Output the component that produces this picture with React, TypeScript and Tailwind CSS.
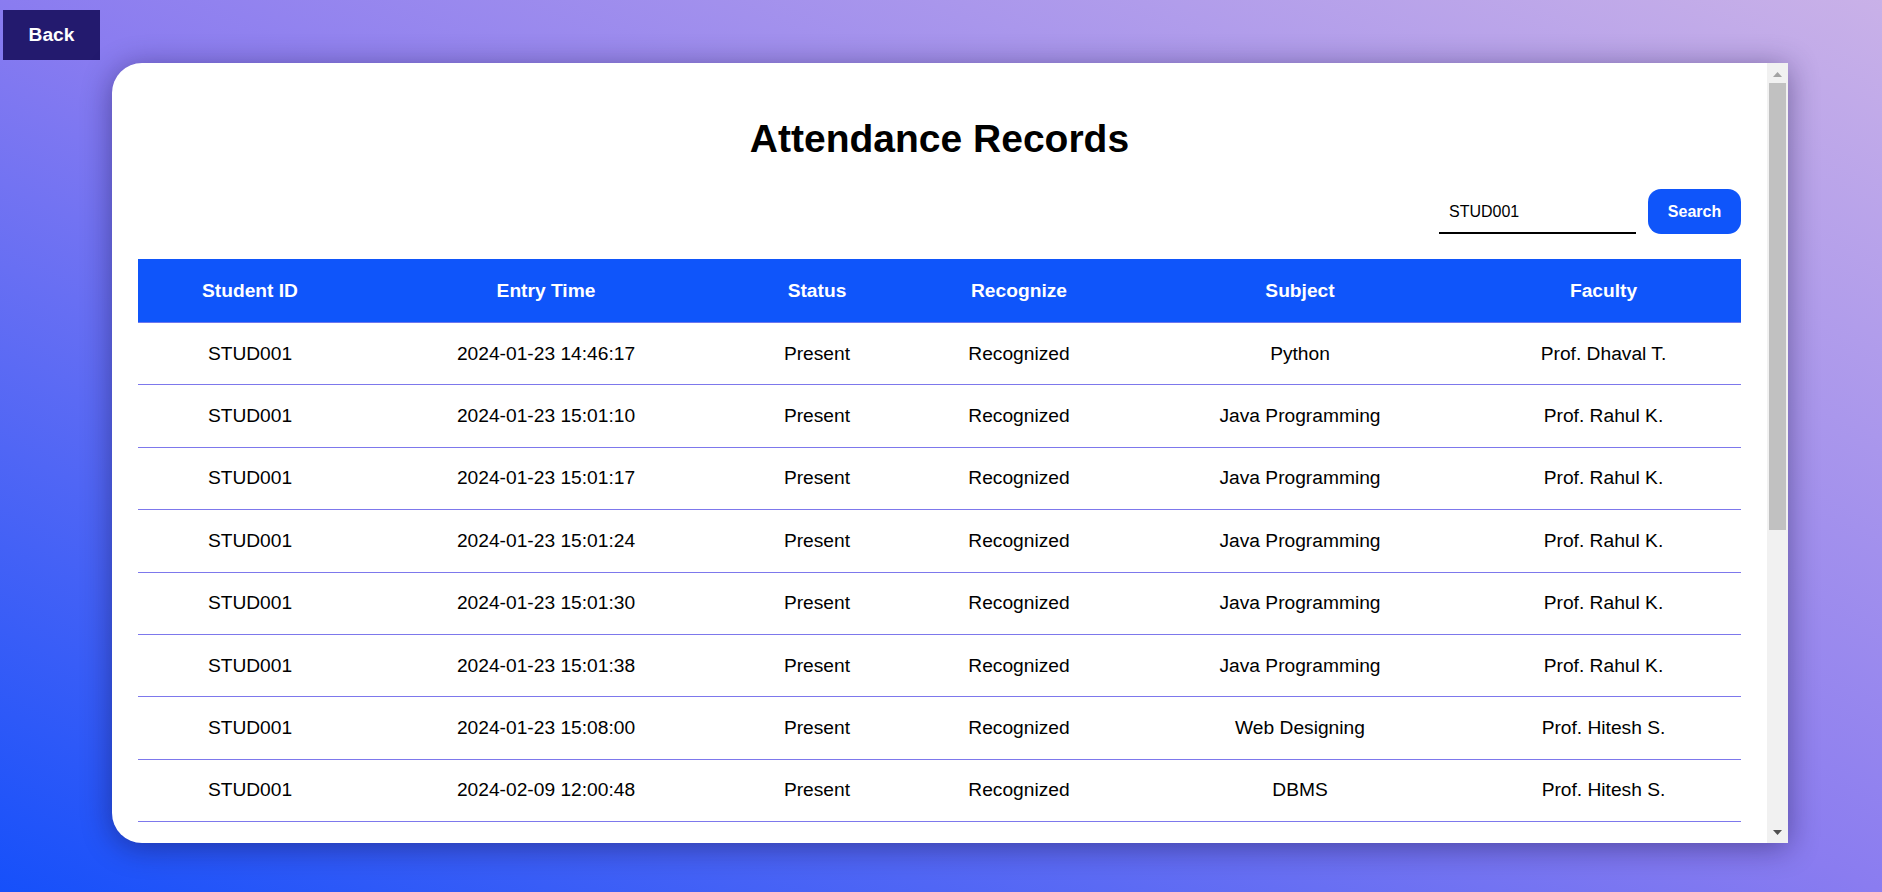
import React from "react";

const rows: [string, string, string, string, string, string][] = [
  ["STUD001", "2024-01-23 14:46:17", "Present", "Recognized", "Python", "Prof. Dhaval T."],
  ["STUD001", "2024-01-23 15:01:10", "Present", "Recognized", "Java Programming", "Prof. Rahul K."],
  ["STUD001", "2024-01-23 15:01:17", "Present", "Recognized", "Java Programming", "Prof. Rahul K."],
  ["STUD001", "2024-01-23 15:01:24", "Present", "Recognized", "Java Programming", "Prof. Rahul K."],
  ["STUD001", "2024-01-23 15:01:30", "Present", "Recognized", "Java Programming", "Prof. Rahul K."],
  ["STUD001", "2024-01-23 15:01:38", "Present", "Recognized", "Java Programming", "Prof. Rahul K."],
  ["STUD001", "2024-01-23 15:08:00", "Present", "Recognized", "Web Designing", "Prof. Hitesh S."],
  ["STUD001", "2024-02-09 12:00:48", "Present", "Recognized", "DBMS", "Prof. Hitesh S."],
];

const headers = ["Student ID", "Entry Time", "Status", "Recognize", "Subject", "Faculty"];
const widths = ["w-[224px]", "w-[368px]", "w-[174px]", "w-[230px]", "w-[332px]", "w-[275px]"];

function Scrollbar() {
  return (
    <div className="flex h-full w-[21px] shrink-0 flex-col bg-[#f1f1f1]">
      <div className="flex h-[20px] items-center justify-center pt-[2px]">
        <svg width="9" height="5" viewBox="0 0 9 5">
          <path d="M0 5 L4.5 0 L9 5 Z" fill="#a3a3a3" />
        </svg>
      </div>
      <div className="mx-[2px] h-[447px] bg-[#c1c1c1]" />
      <div className="flex-1" />
      <div className="flex h-[20px] items-center justify-center pb-[2px]">
        <svg width="9" height="5" viewBox="0 0 9 5">
          <path d="M0 0 L9 0 L4.5 5 Z" fill="#505050" />
        </svg>
      </div>
    </div>
  );
}

export default function App() {
  return (
    <div className="h-[892px] w-full overflow-hidden bg-[linear-gradient(to_top_right,#1650fa,#8a7cf0_50%,#c9b1e8)] font-['Liberation_Sans',Arial,sans-serif]">
      <div className="flex flex-col">
        <button className="ml-[3px] mt-[10px] flex h-[50px] w-[97px] items-center justify-center bg-[#231a6e] text-[19.2px] font-bold text-white">
          Back
        </button>
        <div className="ml-[112px] mt-[3px] flex h-[780px] w-[1676px] overflow-hidden rounded-l-[30px] bg-white shadow-[0_4px_30px_rgba(20,10,60,0.45)]">
          <div className="min-w-0 flex-1 overflow-hidden px-[26px] pt-[54px]">
            <h1 className="text-center text-[39px] font-bold leading-[44px] text-black">
              Attendance Records
            </h1>
            <div className="mt-[28px] flex items-center justify-end gap-[12px]">
              <input
                defaultValue="STUD001"
                className="h-[44px] w-[197px] border-b-2 border-black bg-transparent pl-[10px] pt-[2px] text-[16px] text-black outline-none"
              />
              <button className="h-[45px] w-[93px] rounded-[13px] bg-[#0f55fa] text-[16px] font-bold text-white">
                Search
              </button>
            </div>
            <table className="mt-[25px] w-[1603px] table-fixed border-collapse">
              <thead>
                <tr className="bg-[#0f55fa]">
                  {headers.map((h, i) => (
                    <th
                      key={h}
                      className={`${widths[i]} border-b border-[#6f78ee] py-[20.5px] text-center text-[19.2px] font-bold leading-[22px] text-white`}
                    >
                      {h}
                    </th>
                  ))}
                </tr>
              </thead>
              <tbody>
                {rows.map((r, i) => (
                  <tr key={i}>
                    {r.map((c, j) => (
                      <td
                        key={j}
                        className="border-b border-[#7d78ec] py-[19.7px] text-center text-[19.2px] leading-[22px] text-black"
                      >
                        {c}
                      </td>
                    ))}
                  </tr>
                ))}
              </tbody>
            </table>
          </div>
          <Scrollbar />
        </div>
      </div>
    </div>
  );
}
